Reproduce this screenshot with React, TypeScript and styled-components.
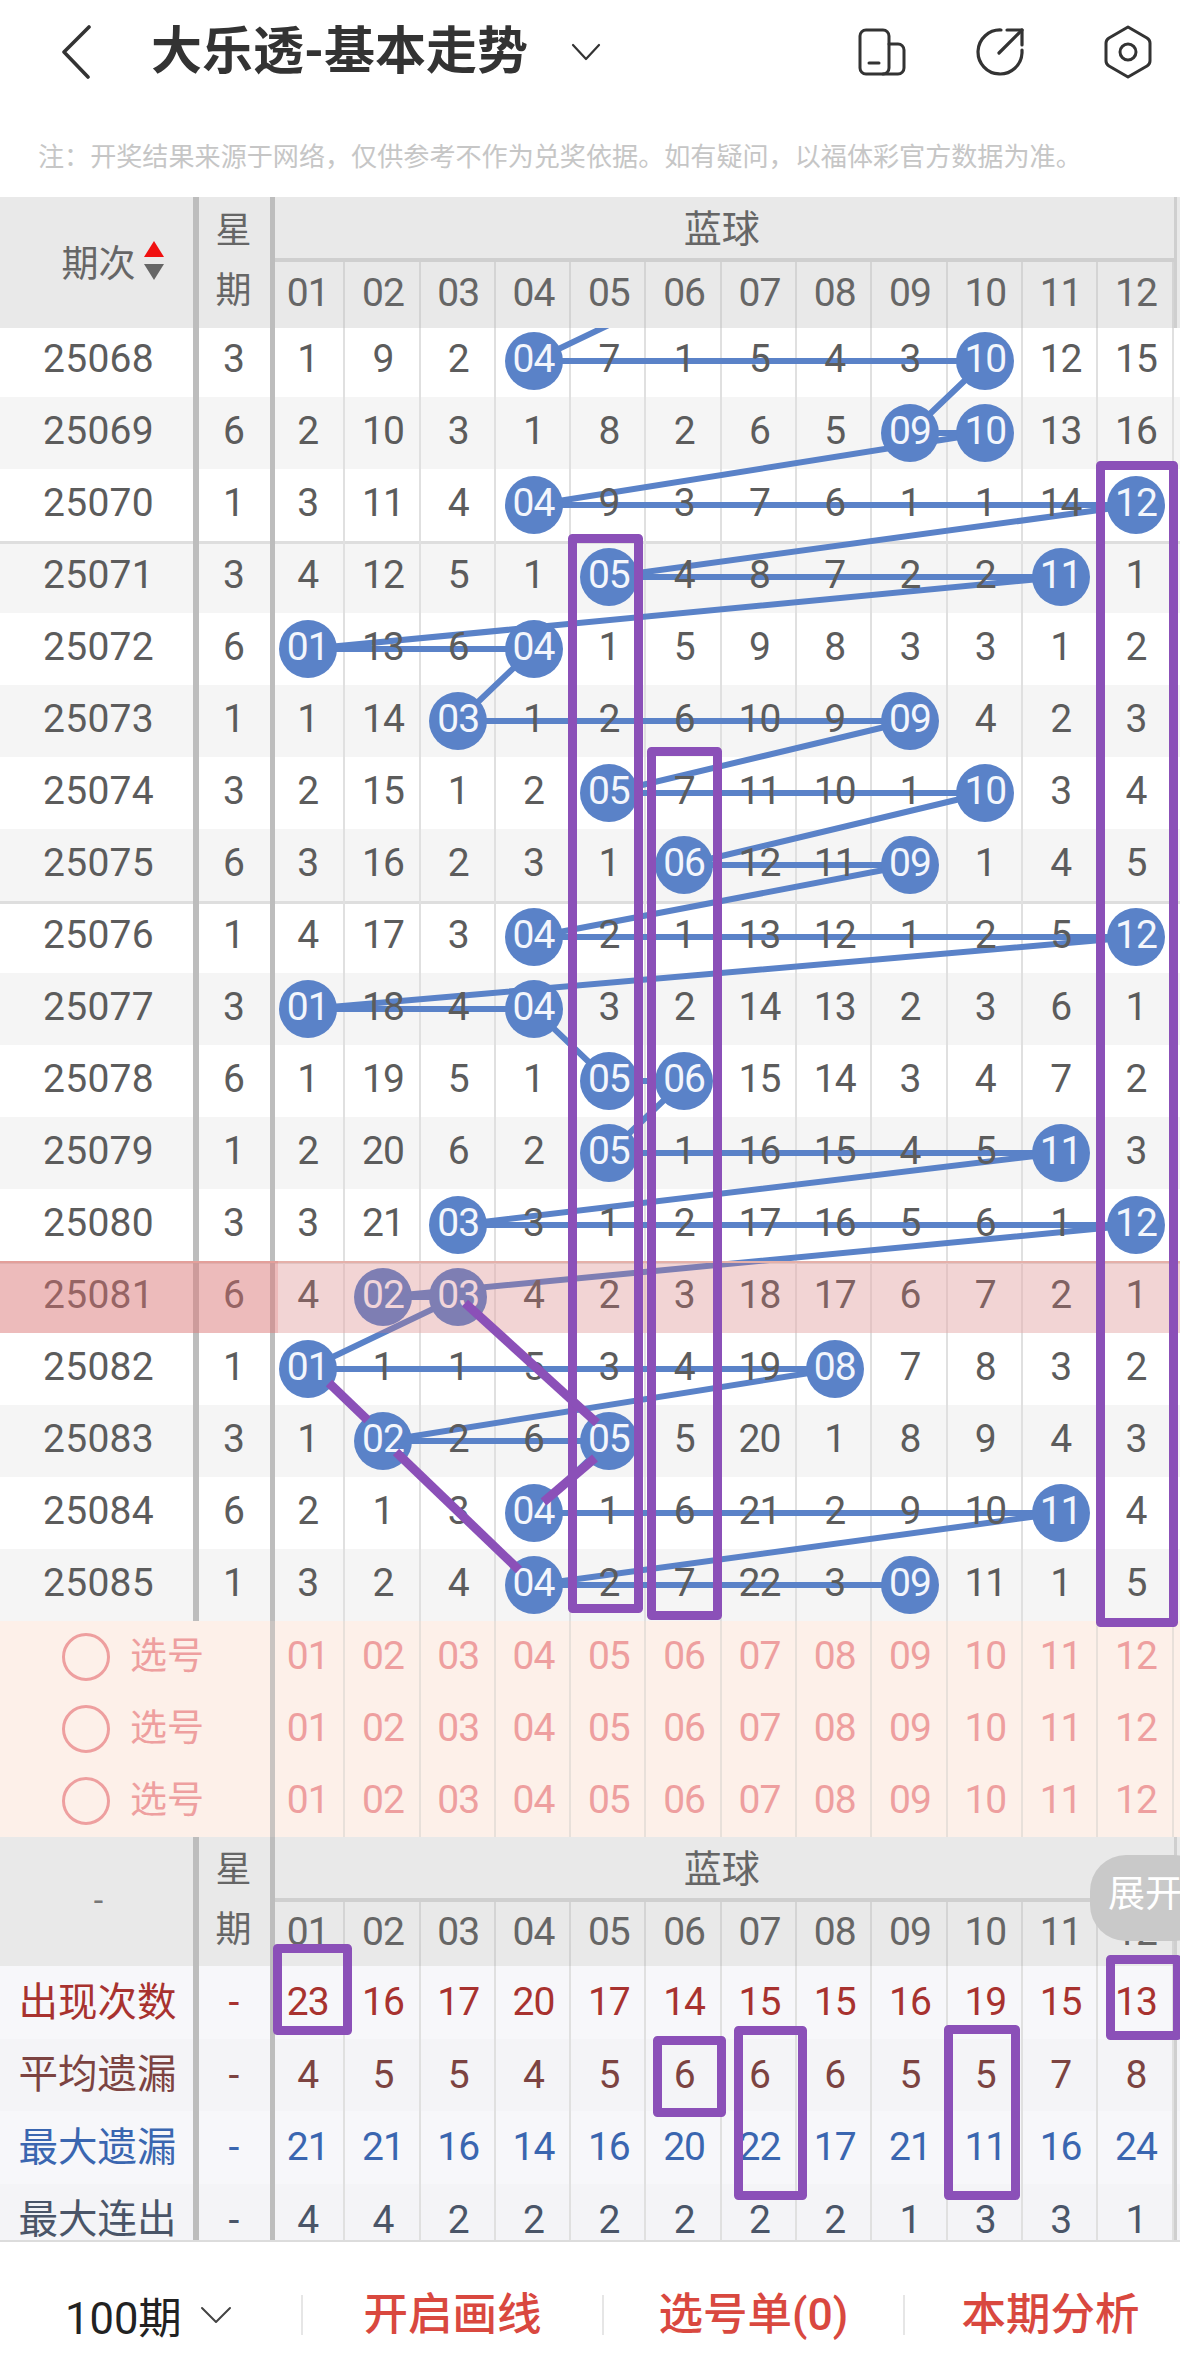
import React from "react";
import styled, { createGlobalStyle } from "styled-components";

const Global = createGlobalStyle`
  html, body { margin: 0; padding: 0; background: #fff; }
  #root { width: 1180px; height: 2380px; }
`;

const FONT = `Roboto, "Noto Sans CJK SC", sans-serif`;
const COLS = "197px 73px repeat(12, 75.3px) 1fr";
const BALL = "#5a82c8";
const PURPLE = "#8b50b8";
const ROW_H = 72;

const cols = Array.from({ length: 12 }, (_, i) => String(i + 1).padStart(2, "0"));
const colX = (c: number) => 307.5 + 75.3 * c;
const rowY = (r: number) => 36 + ROW_H * r;

const RAW: [string, string, string][] = [
  ["25068", "3", "1 9 2 . 7 1 5 4 3 . 12 15"],
  ["25069", "6", "2 10 3 1 8 2 6 5 . . 13 16"],
  ["25070", "1", "3 11 4 . 9 3 7 6 1 1 14 ."],
  ["25071", "3", "4 12 5 1 . 4 8 7 2 2 . 1"],
  ["25072", "6", ". 13 6 . 1 5 9 8 3 3 1 2"],
  ["25073", "1", "1 14 . 1 2 6 10 9 . 4 2 3"],
  ["25074", "3", "2 15 1 2 . 7 11 10 1 . 3 4"],
  ["25075", "6", "3 16 2 3 1 . 12 11 . 1 4 5"],
  ["25076", "1", "4 17 3 . 2 1 13 12 1 2 5 ."],
  ["25077", "3", ". 18 4 . 3 2 14 13 2 3 6 1"],
  ["25078", "6", "1 19 5 1 . . 15 14 3 4 7 2"],
  ["25079", "1", "2 20 6 2 . 1 16 15 4 5 . 3"],
  ["25080", "3", "3 21 . 3 1 2 17 16 5 6 1 ."],
  ["25081", "6", "4 . . 4 2 3 18 17 6 7 2 1"],
  ["25082", "1", ". 1 1 5 3 4 19 . 7 8 3 2"],
  ["25083", "3", "1 . 2 6 . 5 20 1 8 9 4 3"],
  ["25084", "6", "2 1 3 . 1 6 21 2 9 10 . 4"],
  ["25085", "1", "3 2 4 . 2 7 22 3 . 11 1 5"],
];
const ROWS = RAW.map(([period, week, vals]) => ({ period, week, vals: vals.split(" ") }));

const trendPoints: string[] = [`${colX(5)},${rowY(-1)}`];
ROWS.forEach((row, r) => {
  row.vals.forEach((v, c) => {
    if (v === ".") trendPoints.push(`${colX(c)},${rowY(r)}`);
  });
});

const STATS = [
  { label: "出现次数", color: "#a8322f", vals: "23 16 17 20 17 14 15 15 16 19 15 13" },
  { label: "平均遗漏", color: "#7c4341", vals: "4 5 5 4 5 6 6 6 5 5 7 8" },
  { label: "最大遗漏", color: "#3a66b0", vals: "21 21 16 14 16 20 22 17 21 11 16 24" },
  { label: "最大连出", color: "#4a5568", vals: "4 4 2 2 2 2 2 2 1 3 3 1" },
];

const Page = styled.div`
  position: relative;
  width: 1180px;
  height: 2380px;
  overflow: hidden;
  background: #fff;
  font-family: ${FONT};
  color: #5c5c5c;
`;

const TopBar = styled.header`
  display: flex;
  align-items: center;
  height: 104px;
  padding: 0 28px 0 62px;
  box-sizing: border-box;
`;
const Title = styled.h1`
  margin: 0 0 0 59px;
  font-size: 51px;
  line-height: 60px;
  font-weight: 700;
  color: #333;
  white-space: nowrap;
`;
const TitleCaret = styled.svg`
  margin-left: 43px;
  width: 30px;
  height: 18px;
`;
const TopIcons = styled.div`
  margin-left: auto;
  display: flex;
  align-items: center;
  gap: 68px;
  & > :nth-child(2) {
    margin-right: 11px;
  }
`;
const Notice = styled.p`
  margin: 0;
  height: 93px;
  padding: 40px 0 0 38px;
  box-sizing: border-box;
  font-size: 26.1px;
  line-height: 26px;
  color: #c6c6c6;
  white-space: nowrap;
`;

const Head = styled.div<{ $second: number; $overlap?: boolean }>`
  display: grid;
  grid-template-columns: ${COLS};
  grid-template-rows: 65px ${(p) => p.$second}px;
  background: #e9e9e9;
  color: #666;
  position: relative;
  z-index: 4;
  margin-bottom: ${(p) => (p.$overlap ? "-3px" : "0")};
`;
const HeadPeriod = styled.div<{ $shift?: boolean }>`
  grid-row: 1 / 3;
  display: flex;
  align-items: center;
  justify-content: center;
  gap: 8px;
  box-shadow: inset -4px 0 #bdbdbd;
  font-size: 37px;
  padding: 0 0 4px ${(p) => (p.$shift ? "28px" : "0")};
  box-sizing: border-box;
`;
const SortMark = styled.span`
  display: flex;
  flex-direction: column;
  gap: 7px;
`;
const Tri = styled.i<{ $down?: boolean }>`
  display: block;
  width: 0;
  height: 0;
  border-left: 10px solid transparent;
  border-right: 10px solid transparent;
  ${(p) => (p.$down ? "border-top: 16px solid #666;" : "border-bottom: 16px solid #f01010;")}
`;
const Dash = styled.span`
  font-size: 34px;
  color: #777;
`;
const HeadWeek = styled.div`
  grid-row: 1 / 3;
  display: flex;
  flex-direction: column;
  align-items: center;
  justify-content: center;
  box-shadow: inset 2px 0 #bdbdbd;
  font-size: 36px;
  line-height: 60px;
  padding-bottom: 4px;
  box-sizing: border-box;
`;
const HeadTitle = styled.div`
  grid-column: 3 / 15;
  display: flex;
  align-items: center;
  justify-content: center;
  font-size: 38px;
  box-shadow: inset 5px 0 #bdbdbd, inset 0 -4px #cfcfcf;
  padding-bottom: 8px;
  box-sizing: border-box;
`;
const Gutter = styled.div`
  box-shadow: inset 3px 0 #cfcfcf;
`;
const HeadNum = styled.div<{ $first?: boolean }>`
  display: flex;
  align-items: center;
  justify-content: center;
  font-size: 39px;
  letter-spacing: -1px;
  padding-bottom: 4px;
  box-sizing: border-box;
  box-shadow: inset -2px 0 #d4d4d4 ${(p) => (p.$first ? ", inset 5px 0 #bdbdbd" : "")};
`;

const Body = styled.div`
  position: relative;
`;
const TrendLayer = styled.svg`
  position: absolute;
  top: 0;
  left: 0;
  width: 1180px;
  height: ${ROW_H * RAW.length}px;
  z-index: 1;
`;
const Row = styled.div<{ $even: boolean; $rule: boolean }>`
  display: grid;
  grid-template-columns: ${COLS};
  height: ${ROW_H}px;
  background: ${(p) => (p.$even ? "#fff" : "#f5f5f5")};
  box-shadow: ${(p) => (p.$rule ? "inset 0 3px #dedede" : "none")};
  font-size: 39px;
  line-height: 39px;
  color: #5c5c5c;
`;
const Cell = styled.div`
  display: flex;
  align-items: center;
  justify-content: center;
`;
const PeriodCell = styled(Cell)`
  box-shadow: inset -4px 0 #bdbdbd;
`;
const WeekCell = styled(Cell)`
  box-shadow: inset 2px 0 #bdbdbd;
`;
const NumCell = styled(Cell)<{ $first?: boolean }>`
  box-shadow: inset -2px 0 #e0e0e0 ${(p) => (p.$first ? ", inset 5px 0 #bdbdbd" : "")};
`;
const Digit = styled.span`
  position: relative;
  z-index: 2;
  padding-bottom: 4px;
  letter-spacing: -1px;
`;
const PeriodText = styled(Digit)`
  letter-spacing: 0.3px;
`;
const StatDigit = styled(Digit)`
  padding: 1px 0 0;
`;
const Ball = styled.span`
  position: relative;
  z-index: 2;
  flex: none;
  width: 58px;
  height: 58px;
  border-radius: 50%;
  background: ${BALL};
  color: #f3f6fc;
  display: flex;
  align-items: center;
  justify-content: center;
  letter-spacing: -1px;
  padding-bottom: 3px;
  box-sizing: border-box;
`;
const Highlight = styled.div`
  position: absolute;
  left: 0;
  right: 0;
  top: ${ROW_H * 13}px;
  height: ${ROW_H}px;
  z-index: 3;
  display: flex;
  box-shadow: inset 0 2px #e3c4bb;
`;
const HighlightFrozen = styled.div`
  width: 278px;
  background: rgba(228, 112, 112, 0.43);
`;
const HighlightRest = styled.div`
  flex: 1;
  background: rgba(236, 116, 116, 0.25);
`;

const PickRow = styled(Row)`
  background: #fdf0e9;
  color: #ee9f9f;
`;
const PickLabel = styled.div`
  grid-column: 1 / 3;
  display: flex;
  align-items: center;
  gap: 20px;
  padding: 0 0 1px 62px;
  box-sizing: border-box;
  font-size: 37px;
`;
const Radio = styled.span`
  width: 48px;
  height: 48px;
  border-radius: 50%;
  border: 3px solid #ee9f9f;
  box-sizing: border-box;
`;
const PickNum = styled(Cell)<{ $first?: boolean }>`
  box-shadow: inset -2px 0 #e8e0da ${(p) => (p.$first ? ", inset 5px 0 #c9c4c1" : "")};
  padding-bottom: 1px;
  box-sizing: border-box;
  letter-spacing: -1px;
`;

const StatsWrap = styled.div`
  height: 274px;
  overflow: hidden;
`;
const StatRow = styled(Row)<{ $color: string }>`
  height: 72.5px;
  background: ${(p) => (p.$even ? "#f7f7fa" : "#f4f4f7")};
  color: ${(p) => p.$color};
`;
const StatLabel = styled(PeriodCell)`
  font-size: 39.5px;
  padding: 0 2px 0 0;
  box-sizing: border-box;
`;

const BottomBar = styled.footer`
  height: 140px;
  border-top: 2px solid #dcdcdc;
  padding-top: 8px;
  box-sizing: border-box;
  display: flex;
  align-items: center;
  background: #fff;
`;
const PeriodPicker = styled.div`
  width: 301px;
  flex: none;
  display: flex;
  align-items: center;
  padding-left: 65px;
  box-sizing: border-box;
  font-size: 43.5px;
  color: #222;
  gap: 18px;
`;
const Sep = styled.span`
  width: 2px;
  height: 40px;
  flex: none;
  background: #e6e6e6;
`;
const Action = styled.div<{ $last?: boolean }>`
  flex: ${(p) => (p.$last ? "1" : "0 0 299px")};
  text-align: center;
  font-size: 44.5px;
  line-height: 50px;
  font-weight: 500;
  color: #d9483f;
  padding-left: ${(p) => (p.$last ? "16px" : "0")};
  box-sizing: border-box;
  white-space: nowrap;
`;

const ExpandPill = styled.div`
  position: absolute;
  left: 1090px;
  top: 1855px;
  width: 120px;
  height: 86px;
  border-radius: 36px;
  background: #c9c9c9;
  color: #fff;
  font-size: 37px;
  line-height: 80px;
  padding-left: 18px;
  box-sizing: border-box;
  white-space: nowrap;
  z-index: 5;
`;
const MarkLayer = styled.svg`
  position: absolute;
  top: 0;
  left: 0;
  width: 1180px;
  height: 2380px;
  pointer-events: none;
  z-index: 6;
`;

const IconBack = () => (
  <svg width="30" height="54" viewBox="0 0 30 54" fill="none" stroke="#333" strokeWidth="3.6" strokeLinecap="round" strokeLinejoin="round">
    <path d="M27 2 L2 27 L26 52" />
  </svg>
);
const IconPhones = () => (
  <svg width="49" height="48" viewBox="0 0 49 48" fill="none" stroke="#333" strokeWidth="3" strokeLinecap="round" strokeLinejoin="round">
    <rect x="2" y="2" width="29" height="44" rx="6" />
    <path d="M31 16 H40 a6 6 0 0 1 6 6 V40 a6 6 0 0 1 -6 6 H25" />
    <path d="M11 35 H21" />
  </svg>
);
const IconShare = () => (
  <svg width="50" height="50" viewBox="0 0 50 50" fill="none" stroke="#333" strokeWidth="3.2" strokeLinecap="round" strokeLinejoin="round">
    <path d="M26 3 A22 22 0 1 0 47 26 V23" />
    <path d="M32 3 H47 V18" />
    <path d="M47 3 L24 26" />
  </svg>
);
const IconHex = () => (
  <svg width="48" height="54" viewBox="0 0 48 54" fill="none" stroke="#333" strokeWidth="3" strokeLinecap="round" strokeLinejoin="round">
    <path d="M24 2 L43 13 Q46 15 46 18 V36 Q46 39 43 41 L24 52 L5 41 Q2 39 2 36 V18 Q2 15 5 13 Z" />
    <circle cx="24" cy="27" r="8" />
  </svg>
);

const TableHead = ({
  first,
  second,
  overlap,
  shift,
}: {
  first: React.ReactNode;
  second: number;
  overlap?: boolean;
  shift?: boolean;
}) => (
  <Head $second={second} $overlap={overlap}>
    <HeadPeriod $shift={shift}>{first}</HeadPeriod>
    <HeadWeek>
      <span>星</span>
      <span>期</span>
    </HeadWeek>
    <HeadTitle>蓝球</HeadTitle>
    <Gutter />
    {cols.map((c, i) => (
      <HeadNum key={c} $first={i === 0}>
        {c}
      </HeadNum>
    ))}
    <Gutter />
  </Head>
);

const BOXES = [
  [1096, 461, 1178, 1627],
  [568, 534, 643, 1613],
  [647, 747, 722, 1620],
  [273, 1944, 352, 2035],
  [1106, 1955, 1182, 2040],
  [653, 2036, 726, 2117],
  [734, 2026, 807, 2200],
  [944, 2025, 1020, 2200],
];
const STROKES = [
  [465, 1303, 597, 1423],
  [329, 1383, 367.5, 1420],
  [396, 1452, 519, 1570],
  [543.5, 1502, 595, 1458],
];

export default function App() {
  return (
    <Page>
      <Global />
      <TopBar>
        <IconBack />
        <Title>大乐透-基本走势</Title>
        <TitleCaret viewBox="0 0 30 18" fill="none" stroke="#333" strokeWidth="2.2" strokeLinecap="round" strokeLinejoin="round">
          <path d="M2 2 L15 16 L28 2" />
        </TitleCaret>
        <TopIcons>
          <IconPhones />
          <IconShare />
          <IconHex />
        </TopIcons>
      </TopBar>
      <Notice>注：开奖结果来源于网络，仅供参考不作为兑奖依据。如有疑问，以福体彩官方数据为准。</Notice>

      <TableHead
        overlap
        shift
        second={66}
        first={
          <>
            期次
            <SortMark>
              <Tri />
              <Tri $down />
            </SortMark>
          </>
        }
      />
      <Body>
        <TrendLayer viewBox={`0 0 1180 ${ROW_H * RAW.length}`}>
          <polyline points={trendPoints.join(" ")} fill="none" stroke={BALL} strokeWidth="6" strokeLinejoin="round" />
        </TrendLayer>
        {ROWS.map((row, r) => (
          <Row key={row.period} $even={r % 2 === 0} $rule={r % 5 === 3}>
            <PeriodCell>
              <PeriodText>{row.period}</PeriodText>
            </PeriodCell>
            <WeekCell>
              <Digit>{row.week}</Digit>
            </WeekCell>
            {row.vals.map((v, c) => (
              <NumCell key={c} $first={c === 0}>
                {v === "." ? <Ball>{cols[c]}</Ball> : <Digit>{v}</Digit>}
              </NumCell>
            ))}
            <div />
          </Row>
        ))}
        <Highlight>
          <HighlightFrozen />
          <HighlightRest />
        </Highlight>
      </Body>

      {[0, 1, 2].map((p) => (
        <PickRow key={p} $even $rule={false}>
          <PickLabel>
            <Radio />
            选号
          </PickLabel>
          {cols.map((c, i) => (
            <PickNum key={c} $first={i === 0}>
              {c}
            </PickNum>
          ))}
          <div />
        </PickRow>
      ))}

      <TableHead second={64} first={<Dash>-</Dash>} />

      <StatsWrap>
        {STATS.map((s, i) => (
          <StatRow key={s.label} $even={i % 2 === 0} $rule={false} $color={s.color}>
            <StatLabel>{s.label}</StatLabel>
            <WeekCell>
              <StatDigit>-</StatDigit>
            </WeekCell>
            {s.vals.split(" ").map((v, c) => (
              <NumCell key={c} $first={c === 0}>
                <StatDigit>{v}</StatDigit>
              </NumCell>
            ))}
            <Gutter />
          </StatRow>
        ))}
      </StatsWrap>

      <BottomBar>
        <PeriodPicker>
          100期
          <svg width="32" height="18" viewBox="0 0 32 18" fill="none" stroke="#444" strokeWidth="2" strokeLinecap="round" strokeLinejoin="round">
            <path d="M2 2 L16 16 L30 2" />
          </svg>
        </PeriodPicker>
        <Sep />
        <Action>开启画线</Action>
        <Sep />
        <Action>选号单(0)</Action>
        <Sep />
        <Action $last>本期分析</Action>
      </BottomBar>

      <ExpandPill>展开</ExpandPill>

      <MarkLayer viewBox="0 0 1180 2380" fill="none" stroke={PURPLE} strokeWidth="9" strokeLinejoin="round" strokeLinecap="butt">
        {BOXES.map(([x1, y1, x2, y2]) => (
          <rect key={`${x1}-${y1}`} x={x1 + 4.5} y={y1 + 4.5} width={x2 - x1 - 9} height={y2 - y1 - 9} />
        ))}
        {STROKES.map(([x1, y1, x2, y2]) => (
          <line key={`${x1}-${y1}`} x1={x1} y1={y1} x2={x2} y2={y2} />
        ))}
      </MarkLayer>
    </Page>
  );
}
